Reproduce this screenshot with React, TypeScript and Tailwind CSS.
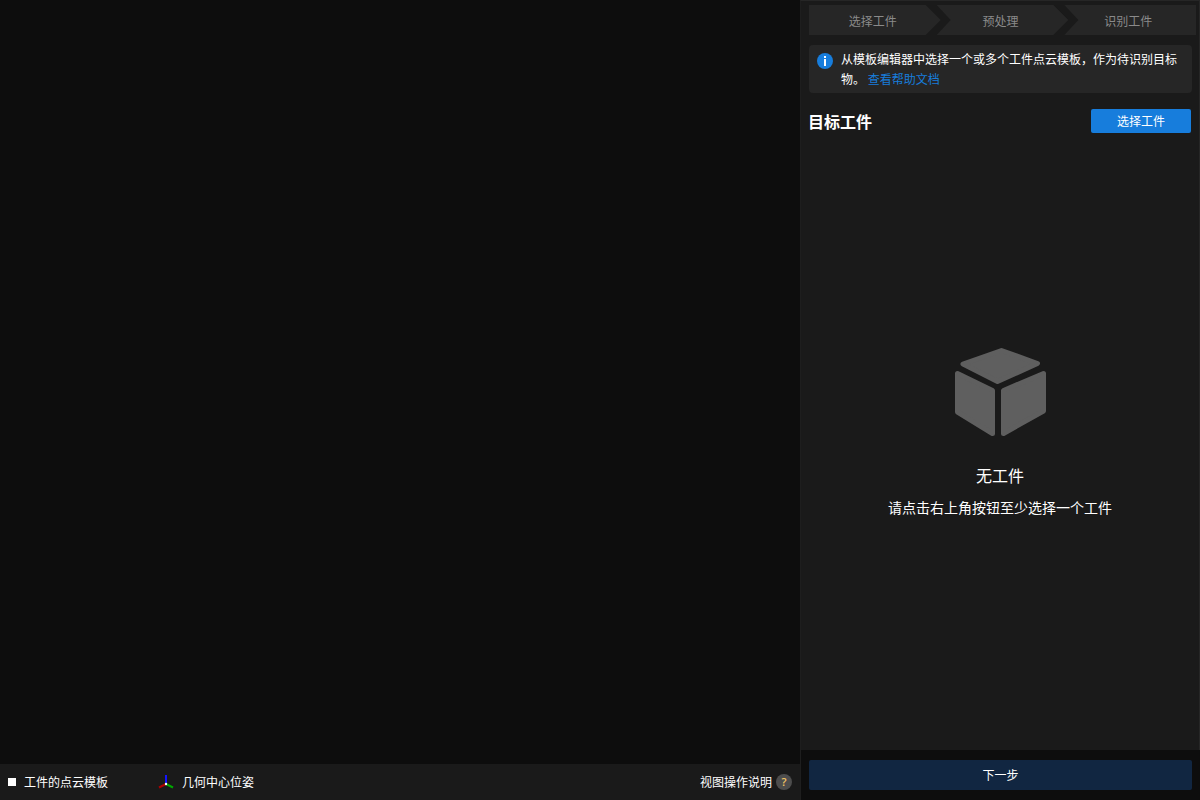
import type { ReactNode } from "react";

function Step({ children, shape }: { children: ReactNode; shape: string }) {
  return (
    <li
      className={`h-[30px] flex-1 bg-[#262626] pr-1 text-center leading-8 text-[#8a8a8a] ${shape}`}
    >
      {children}
    </li>
  );
}

function BoxIcon() {
  return (
    <svg
      width="92"
      height="90"
      viewBox="0 0 92 90"
      fill="#5f5f5f"
      stroke="#5f5f5f"
      strokeWidth="5"
      strokeLinejoin="round"
      aria-hidden="true"
    >
      <path d="M47.500 3.500 L83.500 16.500 L43.500 34.500 L9 17 Z" />
      <path d="M3.500 26.500 L38.500 43.500 V86.500 L3.500 65 Z" />
      <path d="M89.500 26.500 L49.500 43.500 V86.500 L89.500 64 Z" />
    </svg>
  );
}

function AxesIcon() {
  return (
    <svg width="16" height="16" viewBox="0 0 16 16" strokeWidth="2" aria-hidden="true">
      <path d="M8 10V1" stroke="#1414ff" />
      <path d="M8 10L1 13.500" stroke="#b00000" />
      <path d="M8 10L15 13.500" stroke="#00a800" />
      <circle cx="8" cy="10" r="1.200" fill="#fff" />
    </svg>
  );
}

export default function App() {
  return (
    <div className="flex h-screen bg-[#0d0d0d] font-['Noto_Sans_CJK_SC',sans-serif] text-xs text-white">
      <main className="flex min-w-0 flex-1 flex-col">
        <div className="flex-1"></div>
        <footer className="flex h-9 items-center bg-[#1a1a1a] px-2">
          <div className="flex w-[150px] items-center gap-2">
            <span className="size-2 bg-white"></span>
            <span>工件的点云模板</span>
          </div>
          <div className="flex items-center gap-2">
            <AxesIcon />
            <span>几何中心位姿</span>
          </div>
          <div className="ml-auto flex items-center gap-1">
            <span>视图操作说明</span>
            <button
              type="button"
              aria-label="视图操作说明"
              className="flex size-4 items-center justify-center rounded-full bg-[#4d4d4d] font-['Open_Sans',sans-serif] text-[11px] leading-4 font-semibold text-[#f5c563]"
            >
              ?
            </button>
          </div>
        </footer>
      </main>

      <aside className="flex w-[400px] shrink-0 flex-col">
        <div className="flex flex-1 flex-col border-t border-r border-l border-t-[#262626] border-r-[#262626] border-l-[#1e1e1e] bg-[#1a1a1a] pt-1">
          <ol className="flex pr-[3px] pl-2">
            <Step shape="[clip-path:polygon(0_0,calc(100%-15px)_0,100%_50%,calc(100%-15px)_100%,0_100%)]">
              选择工件
            </Step>
            <Step shape="-ml-1 [clip-path:polygon(0_0,calc(100%-15px)_0,100%_50%,calc(100%-15px)_100%,0_100%,14px_50%)]">
              预处理
            </Step>
            <Step shape="-ml-1 [clip-path:polygon(0_0,100%_0,100%_100%,0_100%,14px_50%)]">
              识别工件
            </Step>
          </ol>

          <div className="mt-[10px] mr-[7px] ml-2 flex gap-2 rounded bg-[#262626] px-2 py-1">
            <svg className="mt-1 size-4 shrink-0" viewBox="0 0 16 16" aria-hidden="true">
              <circle cx="8" cy="8" r="8" fill="#177ddc" />
              <path d="M7 3h2v2H7zM7 6h2v7H7z" fill="#fff" />
            </svg>
            <p className="leading-5">
              从模板编辑器中选择一个或多个工件点云模板，作为待识别目标物。{" "}
              <a href="#" className="text-[#177ddc]">
                查看帮助文档
              </a>
            </p>
          </div>

          <div className="mt-4 flex items-center justify-between pr-2 pl-[7px]">
            <h2 className="text-base leading-6 font-bold">目标工件</h2>
            <button type="button" className="h-6 w-[100px] rounded-xs bg-[#177ddc]">
              选择工件
            </button>
          </div>

          <div className="flex flex-1 flex-col items-center pt-[214px]">
            <BoxIcon />
            <p className="mt-[26px] text-base leading-6">无工件</p>
            <p className="mt-2 text-sm leading-6">请点击右上角按钮至少选择一个工件</p>
          </div>
        </div>

        <div className="border-l border-[#1e1e1e] px-2 py-[10px]">
          <button type="button" className="h-[30px] w-full rounded-xs bg-[#112641]">
            下一步
          </button>
        </div>
      </aside>
    </div>
  );
}
